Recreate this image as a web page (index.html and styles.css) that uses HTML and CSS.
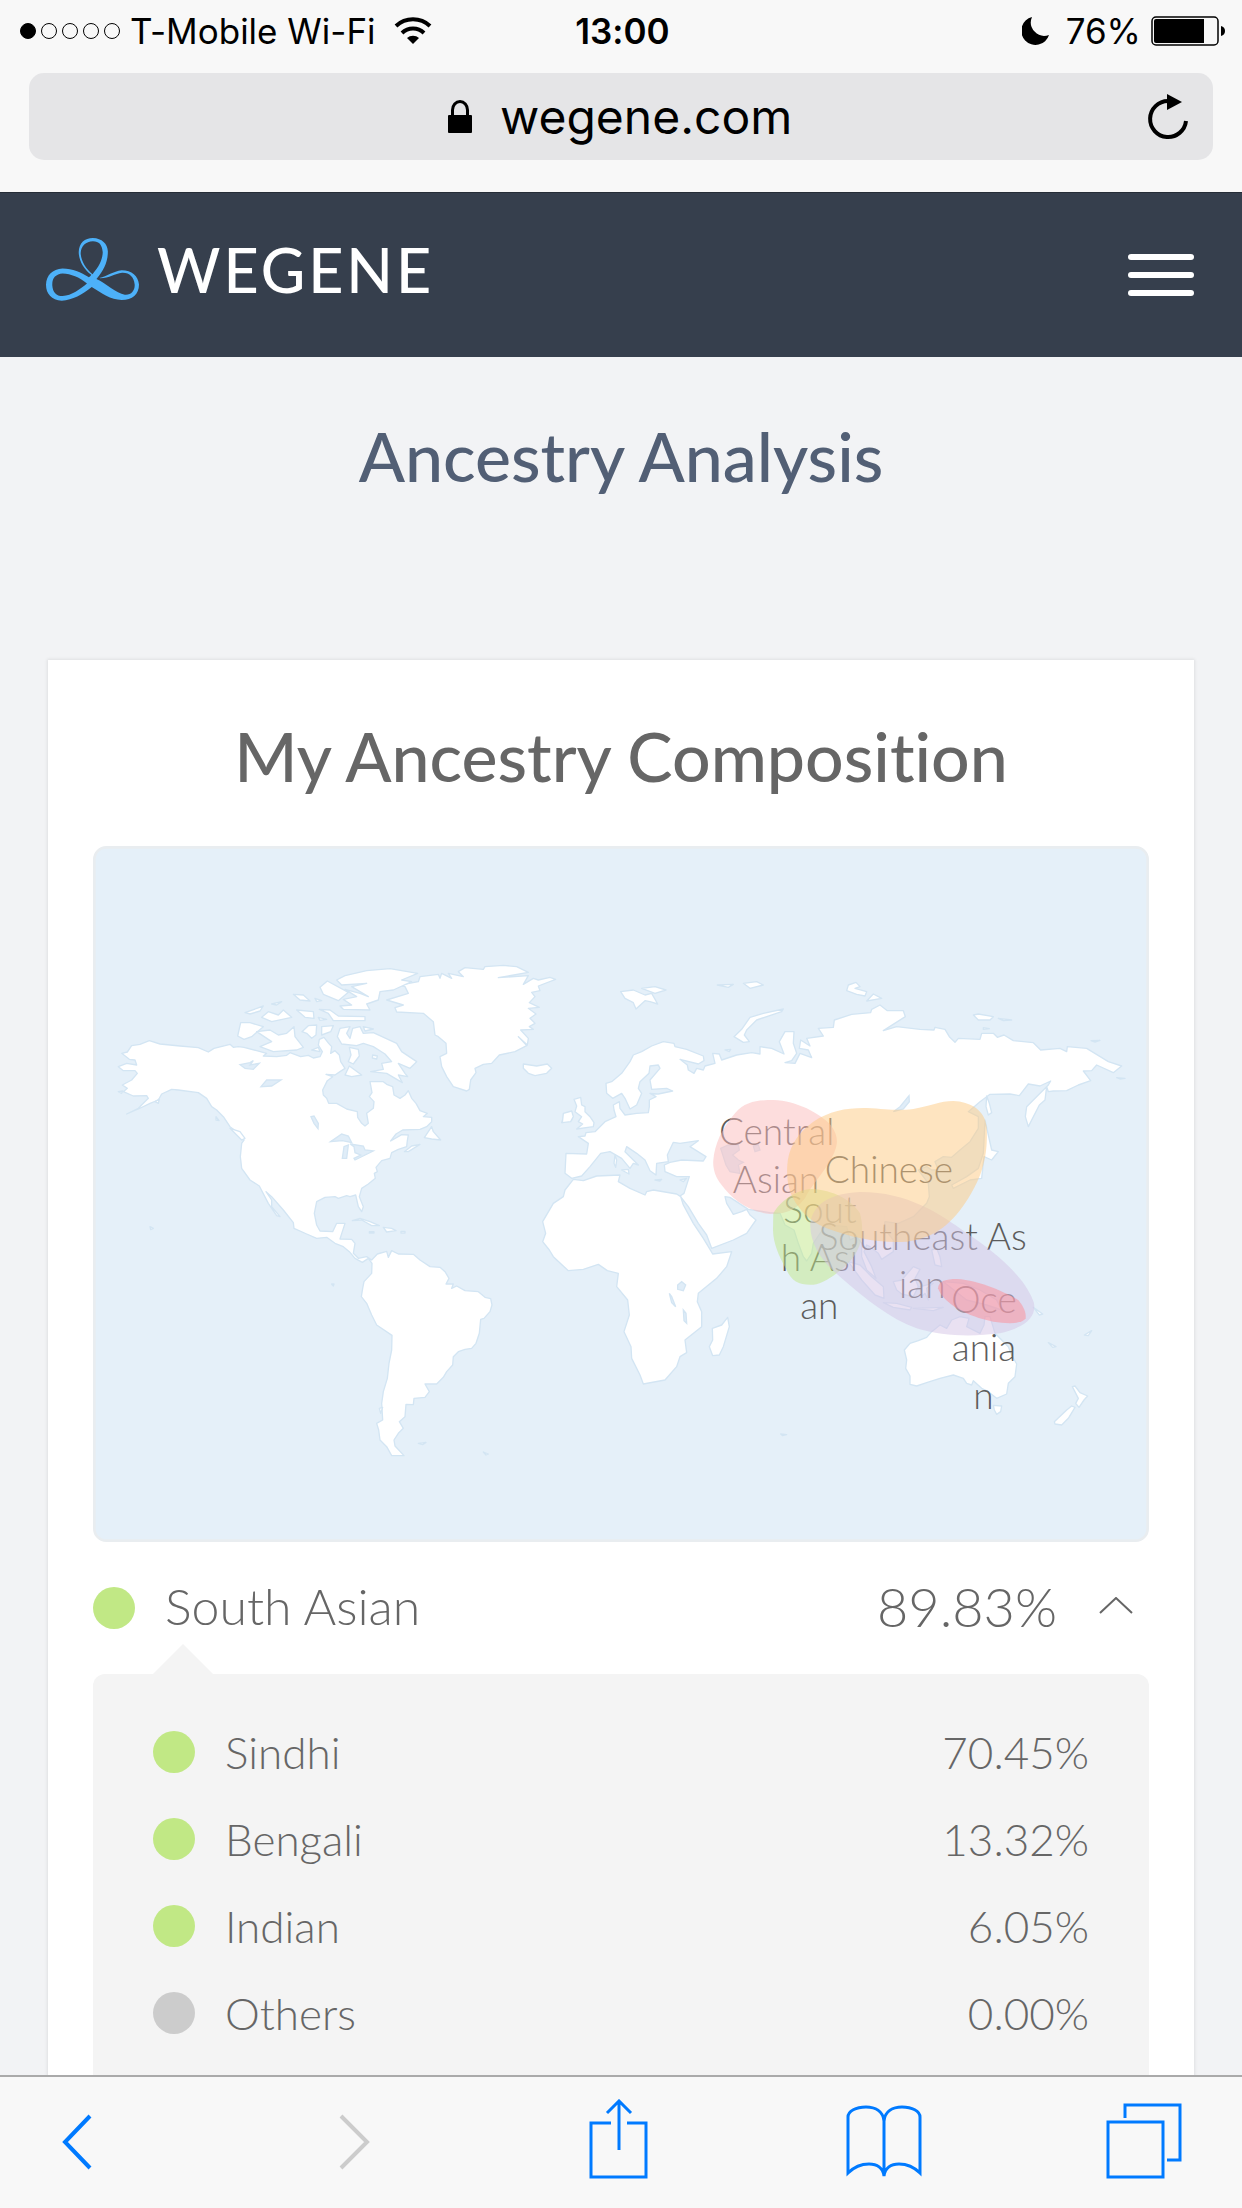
FILE: index.html
```html
<!DOCTYPE html>
<html lang="en">
<head>
    <meta charset="UTF-8">
    <meta name="viewport" content="width=device-width, initial-scale=1.0">
    <title>WeGene - Ancestry Analysis</title>
    <link rel="stylesheet" href="styles.css">
</head>
<body>
<div class="browser-top">
    <div class="status-bar">
        <div class="status-left">
            <div class="signal">
                <span class="signal-dot full"></span>
                <span class="signal-dot"></span>
                <span class="signal-dot"></span>
                <span class="signal-dot"></span>
                <span class="signal-dot"></span>
            </div>
            <span>T-Mobile Wi-Fi</span>
            <svg class="wifi" viewBox="0 0 38 28" aria-hidden="true">
                <path d="M2 9A25 25 0 0 1 36 9" fill="none" stroke="#000" stroke-width="4"/>
                <path d="M8 16A16 16 0 0 1 30 16" fill="none" stroke="#000" stroke-width="4"/>
                <path d="M13 21A9 9 0 0 1 25 21L19 27Z"/>
            </svg>
        </div>
        <div class="status-time">13:00</div>
        <div class="status-right">
            <svg class="moon" viewBox="0 0 28 28" aria-hidden="true">
                <path d="M10 0A14.200 14.200 0 1 0 27 18A13.500 13.500 0 0 1 10 0Z"/>
            </svg>
            <span>76%</span>
            <svg class="battery" viewBox="0 0 74 30" aria-hidden="true">
                <rect x="1" y="1" width="66" height="28" rx="4" fill="none" stroke="#000" stroke-width="1.500"/>
                <path d="M5 3H53V27H5Q3 27 3 25V5Q3 3 5 3Z"/>
                <path d="M70 10Q74 11 74 15T70 20Z"/>
            </svg>
        </div>
    </div>
    <div class="address-bar">
        <svg class="lock" viewBox="0 0 24 34" aria-hidden="true">
            <path d="M4.500 17V10A7.500 8.500 0 0 1 19.500 10V17" fill="none" stroke="#000" stroke-width="3"/>
            <rect y="15" width="24" height="18" rx="1"/>
        </svg>
        <input class="address" type="text" value="wegene.com" aria-label="Address">
        <button class="reload" type="button" aria-label="Reload">
            <svg viewBox="0 0 42 48" aria-hidden="true">
                <path d="M21 8A18 18 0 1 0 39 28" fill="none" stroke="#000" stroke-width="4"/>
                <path d="M20 1L35 9L20 17Z"/>
            </svg>
        </button>
    </div>
</div>

<header class="navbar">
    <a class="brand" href="#">
        <svg class="brand-mark" viewBox="0 0 236 190" preserveAspectRatio="none" aria-hidden="true">
            <path fill="#4db1f9" fill-rule="evenodd" d="M115 111C97 96 83 68 83 42C84 15 98 0 119 0C142 1 156 17 157 40C157 72 147 97 128 124C152 137 178 167 200 171C216 173 226 158 225 140C223 118 212 104 193 105C174 108 160 122 135 121C156 115 170 100 192 97C218 97 234 115 236 140C236 169 219 187 192 187C164 187 141 166 116 148C92 170 68 188 40 189C14 187 0 168 0 141C1 112 16 94 42 92C68 92 88 104 109 118C112 116 114 114 115 111ZM118 109C136 84 143 65 144 43C142 20 135 10 119 10C101 11 89 23 88 46C89 70 102 94 118 109ZM104 137C84 118 64 108 42 107C25 109 15 120 16 143C17 163 26 175 42 175C66 173 86 154 104 137Z"/>
        </svg>
        <span class="brand-name">WEGENE</span>
    </a>
    <button class="menu-toggle" type="button" aria-label="Menu">
        <span></span>
        <span></span>
        <span></span>
    </button>
</header>

<main class="content">
    <h1 class="page-title">Ancestry Analysis</h1>

    <section class="card">
        <h2 class="card-title">My Ancestry Composition</h2>

        <svg class="map" viewBox="0 0 3168 2088" role="img" aria-label="Ancestry map">
            <rect class="sea" x="4" y="4" width="3160" height="2080" rx="36"/>

            <!-- Americas and Greenland -->
            <g class="land" transform="translate(-9 252)">
                <path d="M95 370L112 366L125 347L150 343L178 332L210 342L270 348L325 353L355 366L372 355L405 347L420 343L430 352L445 350L462 352L500 362L530 370L520 378L560 380L590 376L600 368L632 380L655 376L670 384L690 380L697 365L685 345L688 328L702 322L716 340L725 350L722 370L735 362L748 375L752 395L765 415L750 425L735 435L708 433L728 440L712 452L698 480L700 495L710 505L716 520L740 520L770 537L802 545L803 562L815 580L825 588L835 580L830 550L850 535L852 515L838 500L846 488L840 455L880 455L890 463L908 470L912 495L930 505L945 495L955 482L965 505L978 520L990 542L1012 550L1000 560L1025 562L1025 575L1010 590L990 598L938 600L918 612L902 633L935 614L955 615L952 632L950 650L925 658L905 668L900 685L875 692L858 712L862 725L853 730L856 745L835 762L815 775L808 800L820 830L815 845L805 830L797 795L780 800L770 797L745 805L735 800L705 802L680 815L673 850L680 885L690 903L728 905L740 880L765 880L757 905L750 927L785 928L795 940L790 970L805 985L830 980L845 990L862 972L890 964L895 982L905 962L925 972L970 973L990 990L1020 1010L1050 1012L1065 1025L1077 1045L1068 1062L1090 1062L1085 1075L1100 1068L1125 1082L1165 1085L1185 1102L1202 1106L1206 1125L1200 1145L1182 1165L1172 1168L1168 1210L1158 1240L1145 1255L1125 1258L1105 1265L1090 1280L1088 1305L1070 1325L1060 1342L1040 1362L1005 1362L1018 1385L1005 1402L972 1405L970 1424L948 1423L945 1460L928 1475L940 1495L925 1510L912 1530L915 1548L942 1577L905 1577L890 1550L870 1530L866 1500L860 1480L878 1470L875 1420L880 1385L892 1345L897 1300L905 1260L906 1216L860 1185L845 1155L830 1120L814 1100L818 1075L822 1055L845 1030L846 1000L835 985L817 997L795 985L778 965L760 950L735 940L710 922L680 925L650 912L612 895L610 878L580 840L545 800L528 785L545 810L545 830L570 860L560 857L535 820L508 768L480 750L455 715L451 680L455 640L462 630L440 605L420 590L400 560L380 540L365 530L350 505L325 488L265 480L245 478L215 492L205 510L180 520L145 537L110 552L145 535L175 505L170 497L130 498L100 485L112 475L97 465L125 450L142 430L135 422L100 422L85 410L110 400L140 405L135 390L118 388Z"/>
                <path d="M890 210L955 190L945 170L930 165L985 155L990 140L1045 133L1050 145L1055 130L1085 145L1075 130L1120 140L1105 125L1125 113L1180 118L1185 110L1240 106L1280 110L1315 127L1225 143L1315 137L1300 163L1330 145L1345 150L1380 142L1397 148L1345 168L1350 182L1325 187L1335 200L1318 218L1348 232L1315 235L1338 252L1320 265L1335 280L1318 290L1330 298L1292 300L1315 325L1312 345L1285 320L1310 347L1275 365L1228 375L1205 400L1180 403L1155 415L1158 428L1142 450L1138 478L1130 483L1090 470L1070 440L1055 410L1050 380L1070 370L1068 340L1045 320L1035 315L1030 275L1000 250L920 246L915 233L940 225Z"/>
                <path d="M740 150L765 137L830 122L900 116L983 130L935 150L965 155L910 180L870 185L865 210L830 222L840 240L760 238L750 228L785 225L760 208L800 200L765 178L810 190L835 200L785 170L830 160L755 165Z"/>
                <path d="M690 172L712 153L775 187L745 212L700 193Z"/>
                <path d="M688 238L720 240L745 258L825 260L825 272L730 272L715 250Z"/>
                <path d="M443 318L452 278L480 278L520 290L485 320L462 328Z"/>
                <path d="M500 305L540 300L565 315L590 310L612 290L615 320L640 352L620 360L550 365L510 350L545 335Z"/>
                <path d="M465 248L520 228L510 243L480 252ZM515 262L535 245L565 255L580 240L605 262L545 275ZM610 193L640 195L660 213L630 210ZM545 222L575 215L560 225ZM620 240L670 245L672 265L645 262ZM636 305L655 287L680 285L678 315L665 325L650 310ZM695 290L730 287L722 305L695 315ZM675 205L695 212L680 215ZM685 262L710 268L690 271ZM665 360L685 352L690 365Z"/>
                <path d="M742 320L750 295L780 290L770 310L780 325L788 295L810 290L820 310L850 308L920 340L935 365L980 395L960 415L925 400L945 430L953 440L925 435L937 458L890 430L842 425L880 418L875 400L905 395L885 372L850 350L820 340L800 347L755 342Z"/>
                <path d="M778 352L805 358L808 378L790 402L775 395L783 375ZM765 435L778 408L815 435L785 440ZM848 375L862 378L860 387L847 384ZM820 290L850 297L825 303Z"/>
                <path d="M1300 402L1340 408L1372 402L1385 415L1370 430L1335 437L1315 430L1300 415Z"/>
                <path d="M1003 623L1025 590L1030 605L1052 630L1025 627ZM943 665L965 648L990 643L955 665ZM195 515L208 507L205 520ZM378 560L387 572L378 570ZM420 595L450 605L465 625L455 630Z"/>
                <path d="M787 872L810 865L840 875L868 887L845 887L815 870ZM880 892L905 895L918 902L890 906ZM838 905H852V909H838ZM933 904H945V909H933ZM180 890L190 895L182 899ZM85 485L98 483L95 490Z"/>
                <path d="M868 1435L878 1432L872 1450ZM985 1540L1008 1537L998 1544ZM1180 1566L1195 1572L1188 1575ZM725 1062L732 1062L730 1068ZM1415 578L1425 550L1445 545L1445 570Z"/>
            </g>
            <g class="lake" transform="translate(-9 252)">
                <path d="M722 635L755 612L775 618L785 638L757 632ZM762 650L775 645L770 685L757 685ZM780 642L820 648L825 660L850 663L795 690L792 685L812 675L795 668L792 650ZM663 560L672 558L685 580L684 596L672 580ZM513 470L530 450L573 450L545 468ZM450 404L480 398L490 392L480 405L508 400L490 418L465 415Z"/>
            </g>

            <!-- Europe, Asia and Africa -->
            <g class="land" transform="translate(1311 252)">
                <path d="M108 670L170 672L175 640L145 620L165 618L168 608L195 605L225 575L258 560L252 540L250 525L268 515L270 535L285 555L320 550L355 548L358 530L358 510L378 500L360 490L385 492L428 483L410 475L365 478L360 450L390 415L385 405L360 408L357 430L330 455L325 475L335 490L320 525L300 537L285 505L275 490L248 505L230 490L228 460L245 455L275 430L300 395L310 375L335 365L365 348L400 335L432 340L435 350L470 358L520 378L522 392L505 402L450 388L472 405L475 420L492 430L500 415L520 420L525 408L555 400L548 370L568 372L575 390L620 375L665 368L690 372L690 350L725 355L762 372L748 335L765 305L792 305L790 340L800 370L785 392L765 398L795 400L810 370L845 383L835 360L808 355L812 330L840 348L830 325L880 318L865 295L910 292L913 270L965 253L1022 248L1025 238L1050 225L1072 242L1120 242L1126 260L1060 302L1100 290L1170 298L1212 300L1215 292L1245 298L1258 320L1275 337L1285 325L1350 328L1355 310L1390 310L1402 322L1422 315L1450 332L1510 338L1532 360L1590 355L1610 365L1612 350L1670 355L1735 395L1775 408L1750 428L1700 405L1685 422L1660 423L1682 452L1645 465L1610 482L1570 483L1555 485L1550 470L1545 510L1528 525L1495 590L1486 560L1490 530L1525 495L1555 465L1562 453L1530 468L1495 462L1468 497L1440 492L1380 493L1350 515L1315 545L1345 560L1345 595L1320 635L1290 660L1265 682L1240 680L1215 695L1225 720L1205 720L1190 710L1165 720L1195 760L1198 800L1190 820L1150 860L1105 880L1065 875L1062 895L1090 930L1090 965L1055 988L1045 970L1020 950L1010 945L1002 965L1025 1010L1038 1045L1010 1020L995 980L995 940L980 920L960 930L950 890L890 885L870 910L850 940L845 970L830 993L820 980L805 940L792 900L765 885L750 850L720 848L655 838L600 802L585 800L590 820L610 853L635 845L650 838L660 855L678 870L650 910L610 930L545 955L530 915L505 880L475 830L450 798L462 790L478 740L440 740L405 725L403 705L420 697L455 690L520 693L528 680L480 650L505 632L450 640L430 637L412 675L415 695L380 700L378 735L360 722L345 690L320 670L290 650L285 665L325 705L310 700L300 715L275 685L240 665L212 670L180 710L155 738L125 745L105 730Z"/>
                <path d="M130 748L160 752L200 738L270 735L265 755L300 775L345 795L350 785L370 780L440 792L452 800L460 825L490 880L520 925L540 958L548 972L605 965L590 1010L560 1045L505 1090L502 1115L515 1145L515 1190L465 1230L470 1268L450 1280L440 1310L405 1350L340 1362L330 1335L305 1285L303 1250L282 1205L298 1155L293 1110L260 1070L265 1030L232 1022L205 1003L160 1018L115 1022L70 980L58 960L38 935L47 910L38 875L70 820L100 800L105 780Z"/>
                <path d="M593 1162L598 1190L580 1250L568 1275L548 1277L538 1250L548 1230L547 1195L575 1185Z"/>
                <path d="M132 508L152 502L155 525L165 530L165 545L180 560L192 578L190 590L140 597L158 582L145 575L155 560L135 545L140 528ZM97 578L100 550L125 543L130 560L122 575Z"/>
                <path d="M272 185L310 180L345 195L365 190L383 222L360 215L345 212L318 237L310 218L285 205ZM335 175L375 170L408 180L375 190Z"/>
                <path d="M612 320L635 298L660 262L700 250L760 237L755 245L680 270L650 300L643 315L658 335L640 337Z"/>
                <path d="M950 182L955 165L978 157L990 170L975 175L1010 185L1005 198L980 193ZM1010 213L1030 192L1055 205ZM1330 255L1345 252L1390 260L1380 270L1345 270ZM1405 265L1445 270L1420 272ZM1360 293L1378 296L1360 298ZM1683 332L1710 331L1695 336ZM1760 443L1785 445L1770 447Z"/>
                <path d="M562 165L610 163L595 172ZM640 160L680 155L700 165L660 175ZM585 360L602 358L598 365ZM255 675L260 690L257 712L252 700ZM275 720L295 718L297 732ZM375 750L395 748L390 753ZM450 750L470 745L460 755Z"/>
                <path d="M1370 498L1378 520L1385 548L1375 555L1368 530ZM1365 570L1385 660L1405 665L1385 690L1362 680L1355 745L1320 750L1270 775L1265 765L1310 740L1345 715L1360 670Z"/>
            </g>
            <g class="lake" transform="translate(1311 252)">
                <path d="M572 655L595 645L625 645L628 660L608 675L625 690L640 697L625 705L630 730L600 725L588 705ZM670 648L685 645L690 660L675 665ZM1090 545L1110 530L1137 497L1138 515L1120 537ZM443 1065L455 1055L467 1065L460 1082L443 1078ZM418 1090L425 1100L437 1130L425 1118ZM460 1140L468 1150L470 1180L462 1172Z"/>
            </g>

            <!-- South-east Asia and Oceania -->
            <g class="land" transform="translate(1761 672)">
                <path d="M673 840L690 820L715 812L740 802L755 785L780 765L800 775L815 750L840 740L867 745L860 770L900 790L912 765L915 740L930 740L945 790L985 830L995 855L1010 882L1005 920L985 940L980 972L950 985L925 965L905 955L880 932L875 945L860 940L850 925L820 915L780 925L740 938L710 948L690 943L690 918L677 895L680 870Z"/>
                <path d="M940 1006L965 1008L962 1025L950 1033L943 1020Z"/>
                <path d="M1177 950L1185 948L1200 968L1223 978L1212 990L1197 1012L1187 1000L1195 985ZM1123 1055L1160 1020L1175 1008L1185 1012L1165 1045L1145 1065L1125 1062Z"/>
                <path d="M505 575L540 585L575 620L610 650L612 685L585 675L545 630ZM610 698L650 700L695 712L690 720L640 712ZM640 635L665 630L700 590L720 598L705 625L715 650L700 680L665 672L650 660ZM720 650L760 640L740 655L745 690L735 670L725 680ZM755 540L770 535L780 560L785 590L765 585ZM790 635L850 640L900 660L950 690L965 720L920 705L860 690ZM700 715L790 712L760 722Z"/>
                <path d="M1105 818L1128 830L1118 832ZM1213 795L1235 782L1225 797ZM1060 712L1088 732L1078 735ZM302 1092L320 1094L308 1097Z"/>
            </g>

            <g class="region-label" transform="translate(1761 675)">
                <text x="290" y="222">Central</text>
                <text x="288" y="366">Asian</text>
                <text x="627" y="336">Chinese</text>
                <text x="420" y="457">Sout</text>
                <text x="418" y="600">h Asi</text>
                <text x="418" y="745">an</text>
                <text x="728" y="538">Southeast As</text>
                <text x="727" y="681">ian</text>
                <text x="912" y="725">Oce</text>
                <text x="912" y="870">ania</text>
                <text x="910" y="1013">n</text>
            </g>

            <!-- Coloured regions sit over the labels -->
            <g class="regions" transform="translate(1761 672)">
                <path fill="#fbbcbc" d="M100 270C104 225 125 175 165 130C195 92 240 90 280 90C350 92 420 130 452 165C475 195 475 220 462 250C440 300 390 350 375 385C350 415 330 432 270 432C200 425 150 380 125 345C105 320 98 295 100 270Z"/>
                <path fill="#c1e887" d="M280 430C300 395 345 360 395 357C460 360 515 390 540 430C550 470 550 510 530 545C510 585 440 640 400 644C360 646 335 635 320 600C295 555 280 520 279 480Z"/>
                <path fill="#d3c4e6" d="M391 470C390 420 430 370 540 366C680 365 780 430 860 490C960 555 1040 630 1062 700C1068 740 1040 770 960 790C880 800 790 800 710 775C630 745 560 690 480 620C420 570 393 520 391 470Z"/>
                <path fill="#fdc981" d="M322 285C325 240 345 195 400 155C450 122 500 113 560 114C620 117 650 123 700 117C750 108 780 93 820 93C870 95 915 120 920 170C925 260 905 320 865 385C820 455 770 505 680 515C600 520 520 505 440 475C380 450 350 410 332 370C322 340 320 310 322 285Z"/>
                <path fill="#fd8c96" d="M774 655C775 632 800 627 830 627C900 630 980 670 1015 690C1035 715 1038 730 1037 745C1025 762 985 762 940 755C860 740 790 700 774 655Z"/>
            </g>
        </svg>

        <button class="group-row" type="button" aria-expanded="true" aria-controls="southAsian">
            <span class="dot green"></span>
            <span class="group-name">South Asian</span>
            <span class="group-value">89.83%</span>
            <svg class="chevron" viewBox="0 0 34 18" aria-hidden="true">
                <path d="M1 16L17 1L33 16" fill="none" stroke="#666" stroke-width="2"/>
            </svg>
        </button>

        <ul class="sub-list" id="southAsian">
            <li>
                <span class="dot green"></span>
                <span class="sub-name">Sindhi</span>
                <span>70.45%</span>
            </li>
            <li>
                <span class="dot green"></span>
                <span class="sub-name">Bengali</span>
                <span>13.32%</span>
            </li>
            <li>
                <span class="dot green"></span>
                <span class="sub-name">Indian</span>
                <span>6.05%</span>
            </li>
            <li>
                <span class="dot grey"></span>
                <span class="sub-name">Others</span>
                <span>0.00%</span>
            </li>
        </ul>
    </section>
</main>

<nav class="toolbar">
    <button type="button" aria-label="Back">
        <svg viewBox="0 0 84 84" aria-hidden="true"><path class="bold" d="M36 17L11 43L36 69"/></svg>
    </button>
    <button type="button" aria-label="Forward" disabled>
        <svg viewBox="0 0 84 84" aria-hidden="true"><path class="bold" d="M24 17L50 43L24 69"/></svg>
    </button>
    <button type="button" aria-label="Share">
        <svg viewBox="0 0 84 84" aria-hidden="true"><path d="M32 24H12V78H67V24H48M40 51V2M28 14L40 2L52 14"/></svg>
    </button>
    <button type="button" aria-label="Bookmarks">
        <svg viewBox="0 0 84 84" aria-hidden="true"><path d="M42 22C41 12 33 8 24 8C14 8 6 12 6 18V74C13 67 19 65 27 65C35 65 41 69 42 77C43 69 49 65 57 65C65 65 71 67 78 74V18C78 12 70 8 60 8C51 8 43 12 42 22ZM42 22V77"/></svg>
    </button>
    <button type="button" aria-label="Tabs">
        <svg viewBox="0 0 84 84" aria-hidden="true"><path d="M4 23H59V78H4ZM21 19V6H76V61H63"/></svg>
    </button>
</nav>
</body>
</html>
```
FILE: styles.css
```css
* {
    margin: 0;
    padding: 0;
    box-sizing: border-box;
}

body {
    display: flex;
    flex-direction: column;
    height: 100vh;
    background-color: #f2f3f5;
    font-family: Lato, "Open Sans", sans-serif;
    font-variant-ligatures: none;
    color: #666;
}

button {
    border: none;
    background: none;
    font: inherit;
    color: inherit;
    cursor: pointer;
}

svg {
    display: block;
}

/* Browser bars */
.browser-top {
    flex: none;
    height: 193px;
    background-color: #f8f8f8;
    border-bottom: 1px solid #262d37;
    font-family: Inter, Roboto, sans-serif;
    color: #000;
}

.status-bar {
    display: grid;
    grid-template-columns: 1fr auto 1fr;
    align-items: center;
    height: 60px;
    margin-bottom: 13px;
    padding: 2px 17px 0 20px;
    font-size: 35px;
}

.status-left,
.status-right {
    display: flex;
    align-items: center;
    gap: 10px;
}

.status-right {
    justify-content: flex-end;
}

.status-time {
    font-weight: 600;
}

.signal {
    display: flex;
    gap: 5px;
}

.signal-dot {
    width: 16px;
    height: 16px;
    border: 1px solid #000;
    border-radius: 50%;
}

.signal-dot.full {
    background-color: #000;
}

.wifi {
    width: 38px;
    height: 28px;
    margin-left: 8px;
}

.moon {
    width: 28px;
    height: 28px;
    margin-right: 6px;
}

.battery {
    width: 74px;
    height: 30px;
}

.address-bar {
    display: flex;
    justify-content: center;
    align-items: center;
    gap: 28px;
    position: relative;
    height: 87px;
    margin: 0 29px;
    border-radius: 15px;
    background-color: #e5e5e7;
}

.lock {
    width: 24px;
    height: 34px;
}

.address {
    width: 294px;
    border: none;
    background: none;
    font-family: inherit;
    font-size: 48px;
    color: inherit;
}

.reload {
    position: absolute;
    right: 24px;
}

.reload svg {
    width: 42px;
    height: 48px;
}

/* Site header */
.navbar {
    flex: none;
    display: flex;
    justify-content: space-between;
    align-items: center;
    height: 164px;
    padding: 0 48px 0 46px;
    background-color: #363f4d;
}

.brand {
    display: flex;
    align-items: center;
    gap: 18px;
    margin-bottom: 12px;
    color: #fff;
    text-decoration: none;
}

.brand-mark {
    width: 93px;
    height: 63px;
}

.brand-name {
    font-size: 61px;
    font-weight: 500;
    letter-spacing: 3px;
}

.menu-toggle {
    display: flex;
    flex-direction: column;
    gap: 12px;
}

.menu-toggle span {
    width: 66px;
    height: 6px;
    border-radius: 3px;
    background-color: #fff;
}

/* Page */
.content {
    flex: 1;
    min-height: 0;
    overflow: hidden;
    padding: 59px 48px 0;
}

.page-title,
.card-title {
    font-size: 68px;
    font-weight: 500;
    line-height: 80px;
    text-align: center;
}

.page-title {
    margin-bottom: 164px;
    color: #525f75;
}

.card {
    padding: 56px 45px;
    background-color: #fff;
    box-shadow: 0 0 3px 1px rgba(0, 0, 0, 0.08);
}

.card-title {
    margin-bottom: 50px;
}

/* Map */
.map {
    width: 100%;
    height: auto;
}

.sea {
    fill: #e5f0f9;
    stroke: #e9edf0;
    stroke-width: 8px;
}

.land {
    fill: #fff;
    stroke: #d3e5f3;
    stroke-width: 4px;
    stroke-linejoin: round;
}

.lake {
    fill: #e0edf8;
    stroke: #d3e5f3;
    stroke-width: 4px;
}

.region-label {
    fill: #5c5c5c;
    font-size: 111px;
    font-weight: 300;
    text-anchor: middle;
}

.regions path {
    opacity: 0.5;
}

/* Composition list */
.group-row {
    display: flex;
    align-items: center;
    width: 100%;
    height: 132px;
    padding-right: 16px;
    font-size: 50px;
    font-weight: 300;
    text-align: left;
}

.dot {
    width: 42px;
    height: 42px;
    margin-right: 30px;
    border-radius: 50%;
}

.green {
    background-color: #c1e885;
}

.grey {
    background-color: #ccc;
}

.group-name,
.sub-name {
    flex: 1;
}

.group-name,
.group-value {
    padding-bottom: 4px;
}

.group-value {
    margin-right: 42px;
    font-size: 54px;
}

.chevron {
    width: 34px;
    height: 18px;
    margin-bottom: 4px;
}

.sub-list {
    position: relative;
    padding: 34px 60px;
    border-radius: 12px;
    background-color: #f4f4f4;
    list-style: none;
}

.sub-list::before {
    content: "";
    position: absolute;
    top: -30px;
    left: 60px;
    border: 30px solid transparent;
    border-top: none;
    border-bottom-color: #f4f4f4;
}

.sub-list li {
    display: flex;
    align-items: center;
    height: 87px;
    font-size: 44px;
    font-weight: 300;
}

/* Bottom toolbar */
.toolbar {
    flex: none;
    display: flex;
    justify-content: space-between;
    align-items: center;
    height: 133px;
    padding: 0 54px 4px;
    border-top: 2px solid #aaa;
    background-color: #f8f8f8;
}

.toolbar svg {
    width: 84px;
    height: 84px;
    fill: none;
    stroke: #007aff;
    stroke-width: 3px;
}

.toolbar .bold {
    stroke-width: 4px;
}

.toolbar button:disabled svg {
    stroke: #ccc;
}
```
